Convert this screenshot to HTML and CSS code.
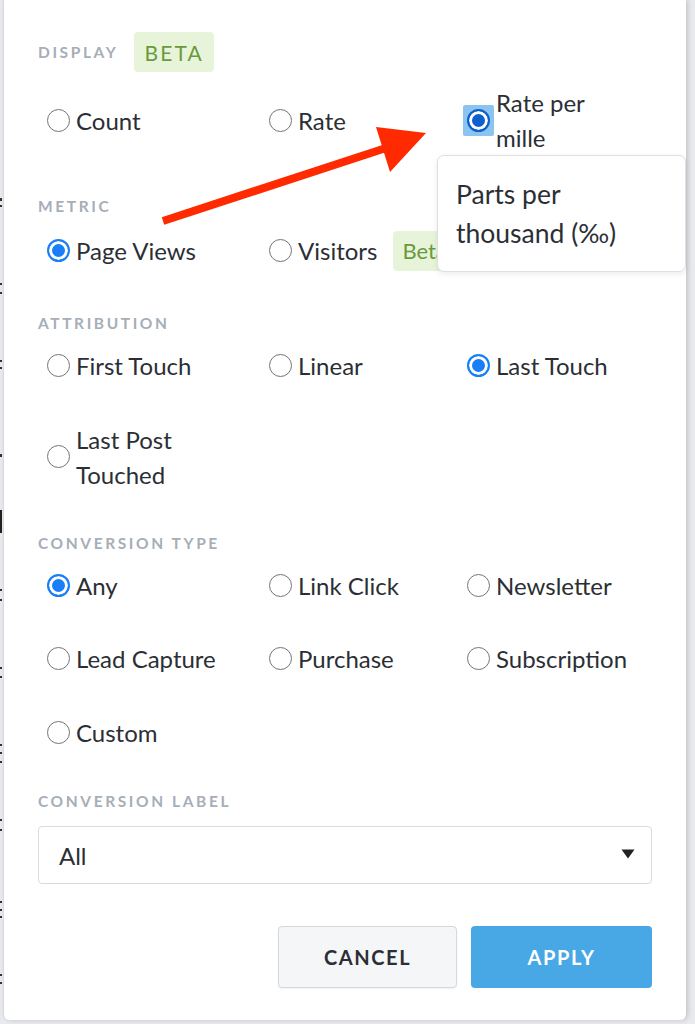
FILE: index.html
```html
<!DOCTYPE html>
<html lang="en">
<head>
<meta charset="utf-8">
<title>Display options</title>
<link rel="stylesheet" href="styles.css">
</head>
<body>
<div class="panel">
  <section class="sec sec-display">
    <div class="sec-head">
      <span class="label">Display</span>
      <span class="badge badge-beta">BETA</span>
    </div>
    <div class="options">
      <label class="opt"><span class="radio"></span><span class="txt">Count</span></label>
      <label class="opt"><span class="radio"></span><span class="txt">Rate</span></label>
      <label class="opt"><span class="focus"><span class="radio checked focused"></span></span><span class="txt">Rate per<br>mille</span></label>
    </div>
  </section>

  <section class="sec sec-metric">
    <div class="label label-row">Metric</div>
    <div class="options">
      <label class="opt"><span class="radio checked"></span><span class="txt">Page Views</span></label>
      <label class="opt"><span class="radio"></span><span class="txt">Visitors</span><span class="badge badge-small">Beta</span></label>
    </div>
  </section>

  <section class="sec sec-attr">
    <div class="label label-row">Attribution</div>
    <div class="options">
      <label class="opt"><span class="radio"></span><span class="txt">First Touch</span></label>
      <label class="opt"><span class="radio"></span><span class="txt">Linear</span></label>
      <label class="opt"><span class="radio checked"></span><span class="txt">Last Touch</span></label>
      <label class="opt"><span class="radio"></span><span class="txt">Last Post<br>Touched</span></label>
    </div>
  </section>

  <section class="sec sec-type">
    <div class="label label-row">Conversion Type</div>
    <div class="options">
      <label class="opt"><span class="radio checked"></span><span class="txt">Any</span></label>
      <label class="opt"><span class="radio"></span><span class="txt">Link Click</span></label>
      <label class="opt"><span class="radio"></span><span class="txt">Newsletter</span></label>
      <label class="opt"><span class="radio"></span><span class="txt">Lead Capture</span></label>
      <label class="opt"><span class="radio"></span><span class="txt">Purchase</span></label>
      <label class="opt"><span class="radio"></span><span class="txt">Subscription</span></label>
      <label class="opt"><span class="radio"></span><span class="txt">Custom</span></label>
    </div>
  </section>

  <section class="sec sec-label">
    <div class="label label-row">Conversion Label</div>
    <div class="select">
      <span class="select-value">All</span>
      <svg class="caret" width="14" height="10" viewBox="0 0 14 10"><path d="M0.5 0.5 H13.5 L7 9.5 Z" fill="#222"/></svg>
    </div>
  </section>

  <div class="actions">
    <button class="btn btn-cancel">CANCEL</button>
    <button class="btn btn-apply">APPLY</button>
  </div>

  <svg class="arrow" width="695" height="260" viewBox="0 0 695 260">
    <line x1="163" y1="221" x2="386" y2="148" stroke="#ff2a00" stroke-width="8"/>
    <polygon points="376,127 426,133 390,172" fill="#ff2a00"/>
  </svg>

  <div class="tooltip">Parts per<br>thousand (‰)</div>
</div>
</body>
</html>
```

FILE: styles.css
```css
* { box-sizing: border-box; }

html, body {
  margin: 0;
  padding: 0;
}

body {
  width: 695px;
  height: 1024px;
  overflow: hidden;
  font-family: Lato, "Liberation Sans", sans-serif;
  color: #2b2f35;
  background:
    linear-gradient(to bottom,
      transparent 198px, #333 198px, #333 201px, transparent 201px,
      transparent 205px, #333 205px, #333 207px, transparent 207px,
      transparent 283px, #333 283px, #333 285px, transparent 285px,
      transparent 292px, #333 292px, #333 294px, transparent 294px,
      transparent 360px, #333 360px, #333 362px, transparent 362px,
      transparent 367px, #333 367px, #333 369px, transparent 369px,
      transparent 454px, #333 454px, #333 457px, transparent 457px,
      transparent 510px, #222 510px, #222 533px, transparent 533px,
      transparent 589px, #333 589px, #333 591px, transparent 591px,
      transparent 599px, #333 599px, #333 601px, transparent 601px,
      transparent 667px, #333 667px, #333 669px, transparent 669px,
      transparent 676px, #333 676px, #333 678px, transparent 678px,
      transparent 744px, #333 744px, #333 746px, transparent 746px,
      transparent 752px, #333 752px, #333 754px, transparent 754px,
      transparent 761px, #333 761px, #333 763px, transparent 763px,
      transparent 819px, #333 819px, #333 821px, transparent 821px,
      transparent 829px, #333 829px, #333 831px, transparent 831px,
      transparent 901px, #333 901px, #333 903px, transparent 903px,
      transparent 909px, #333 909px, #333 911px, transparent 911px,
      transparent 916px, #333 916px, #333 918px, transparent 918px,
      transparent 974px, #333 974px, #333 976px, transparent 976px,
      transparent 982px, #333 982px, #333 984px, transparent 984px) 0 0 / 2px 100% no-repeat,
    #e9eaed;
}

.panel {
  position: relative;
  margin-left: 3px;
  width: 683px;
  height: 1020px;
  background: #fff;
  border-left: 1px solid #d8dadd;
  border-bottom-left-radius: 6px;
  border-bottom-right-radius: 6px;
  box-shadow: 2px 0 5px rgba(0, 0, 0, 0.16);
  padding: 32px 34px 32px 34px;
}

.label {
  font-size: 15.5px;
  font-weight: 700;
  letter-spacing: 2.6px;
  text-transform: uppercase;
  color: #a6aeb7;
  line-height: 20px;
}

.sec-head {
  display: flex;
  align-items: center;
  gap: 16px;
  height: 40px;
  margin-bottom: 13px;
}

.badge {
  display: inline-flex;
  align-items: center;
  background: #e7f4da;
  color: #6a9a3c;
  border-radius: 4px;
}

.badge-beta {
  height: 40px;
  padding: 0 10px;
  font-size: 21px;
  letter-spacing: 2.2px;
}

.badge-small {
  height: 40px;
  margin: -2.5px 0 -2.5px 16px;
  padding: 0 9px;
  font-size: 22px;
}

.label-row { margin-bottom: 15px; }

.sec-metric { margin-top: 41px; }
.sec-metric .label-row { margin-bottom: 17px; }
.sec-attr { margin-top: 45px; }
.sec-type { margin-top: 41px; }
.sec-label { margin-top: 41.5px; }

.options {
  display: grid;
  grid-template-columns: 222px 198px 1fr;
  row-gap: 38.5px;
  padding-left: 9px;
}

.opt {
  display: flex;
  align-items: center;
  min-height: 35px;
  font-size: 24px;
  line-height: 35px;
  color: #2b2f35;
  white-space: nowrap;
}

.radio {
  flex: none;
  display: inline-block;
  width: 23px;
  height: 23px;
  border-radius: 50%;
  border: 1.6px solid #747474;
  background: #fff;
  margin-right: 6px;
}

.radio.checked {
  border: 2px solid #1a7ff6;
  background: #1a7ff6;
  box-shadow: inset 0 0 0 3px #fff;
}

.radio.focused {
  border-color: #0d5fcf;
  background: #0d5fcf;
  margin-right: 0;
}

.focus {
  flex: none;
  display: inline-flex;
  padding: 4px;
  margin: -4px 2px -4px -4px;
  background: #8cc4f0;
  border-radius: 2px;
}

.select {
  display: flex;
  align-items: center;
  justify-content: space-between;
  height: 58px;
  border: 1px solid #d9dbdf;
  border-radius: 4px;
  padding: 0 16px 0 20px;
  font-size: 24px;
}

.caret { margin-top: -2px; }

.actions {
  display: flex;
  justify-content: flex-end;
  gap: 14px;
  margin-top: 42px;
}

.btn {
  height: 62px;
  border-radius: 4px;
  font-family: Lato, "Liberation Sans", sans-serif;
  font-size: 20px;
  font-weight: 700;
  letter-spacing: 1.6px;
}

.btn-cancel {
  width: 179px;
  background: #f5f6f8;
  border: 1px solid #d5d8dc;
  color: #2b2f35;
  box-shadow: 0 1px 2px rgba(0, 0, 0, 0.06);
}

.btn-apply {
  width: 181px;
  background: #47a8e5;
  border: none;
  color: #fff;
}

.arrow {
  position: absolute;
  left: -4px;
  top: 0;
  pointer-events: none;
}

.tooltip {
  position: absolute;
  top: 155px;
  right: 0;
  width: 249px;
  height: 117px;
  background: #fff;
  border: 1px solid #dcdfe3;
  border-radius: 7px;
  box-shadow: 0 2px 6px rgba(0, 0, 0, 0.08);
  padding: 19px 18px;
  font-size: 26.5px;
  line-height: 39px;
  color: #2b2f35;
}
```
